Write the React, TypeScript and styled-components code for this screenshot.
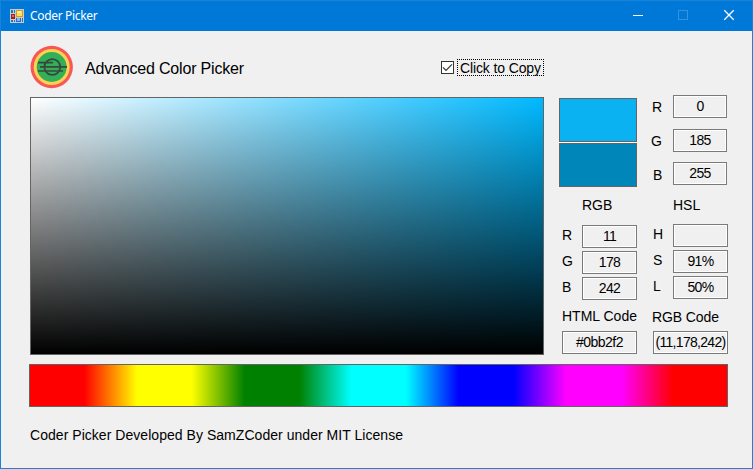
import React from "react";
import styled, { createGlobalStyle } from "styled-components";

const GlobalStyle = createGlobalStyle`
  * { box-sizing: border-box; }
  body { margin: 0; background: #f0f0f0; }
`;

const Window = styled.div`
  width: 753px;
  height: 469px;
  display: flex;
  flex-direction: column;
  border: 1px solid #1883d7;
  background: #f0f0f0;
  color: #000;
  font: 14px/16px "Liberation Sans", Arial, sans-serif;
  white-space: nowrap;
  overflow: hidden;
`;

const TitleBar = styled.header`
  height: 30px;
  flex: none;
  display: flex;
  align-items: center;
  padding-left: 9px;
  background: #0078d7;
  color: #fff;
`;

const AppIcon = styled.svg`
  width: 14px;
  height: 14px;
  display: block;
  margin-right: 6px;
  margin-top: -1px;
`;

const WindowTitle = styled.span`
  flex: 1;
  font: 12px/16px "Noto Sans", "Open Sans", sans-serif;
  letter-spacing: -0.33px;
`;

const WindowControls = styled.svg`
  width: 138px;
  height: 30px;
  display: block;
`;

const Header = styled.div`
  height: 66px;
  flex: none;
  display: flex;
  align-items: flex-start;
  padding-left: 29px;
`;

const Logo = styled.svg`
  width: 44px;
  height: 44px;
  display: block;
  margin-top: 14px;
`;

const Heading = styled.h1`
  margin: 28px 0 0 11px;
  font-size: 16px;
  line-height: 20px;
  font-weight: 400;
  letter-spacing: -0.18px;
  width: 356px;
`;

const CheckLabel = styled.label`
  display: flex;
  align-items: center;
  gap: 3px;
  margin-top: 28px;
`;

const CheckBox = styled.svg`
  width: 13px;
  height: 13px;
  display: block;
`;

const FocusText = styled.span`
  width: 87px;
  height: 17px;
  padding-left: 2px;
  border: 1px dotted #000;
  line-height: 17px;
  letter-spacing: -0.12px;
`;

const Main = styled.main`
  height: 267px;
  flex: none;
  display: flex;
  align-items: flex-start;
  padding-left: 29px;
`;

const ShadeField = styled.div`
  width: 514px;
  height: 258px;
  border: 1px solid #646464;
  background: linear-gradient(to bottom, transparent, #000),
    linear-gradient(to right, #fff, #00b9ff);
`;

const Column = styled.section<{ $left: number; $width: number; $top?: number }>`
  width: ${(p) => p.$width}px;
  margin-left: ${(p) => p.$left}px;
  padding-top: ${(p) => p.$top ?? 0}px;
`;

const Swatches = styled.div`
  display: grid;
  grid-template-rows: 44px 44px;
  gap: 1px;
  height: 89px;
  background: #fff;
`;

const Swatch = styled.div<{ $color: string }>`
  border: 1px solid #646464;
  background: ${(p) => p.$color};
`;

const Caption = styled.div<{ $top: number; $left?: number; $spacing?: number }>`
  margin-top: ${(p) => p.$top}px;
  padding-left: ${(p) => p.$left ?? 0}px;
  letter-spacing: ${(p) => p.$spacing ?? 0}px;
  height: 16px;
`;

const FieldRow = styled.div<{ $top: number; $left?: number; $right?: number }>`
  display: flex;
  justify-content: space-between;
  height: 23px;
  margin-top: ${(p) => p.$top}px;
  padding-left: ${(p) => p.$left ?? 0}px;
  padding-right: ${(p) => p.$right ?? 0}px;
`;

const FieldName = styled.span<{ $drop: number }>`
  padding-top: ${(p) => p.$drop}px;
`;

const ValueBox = styled.output<{ $width: number; $spacing?: number }>`
  width: ${(p) => p.$width}px;
  height: 23px;
  display: flex;
  justify-content: center;
  border: 1px solid #7a7a7a;
  box-shadow: inset 0 0 0 1px #fff;
  line-height: 21px;
  letter-spacing: ${(p) => p.$spacing ?? -0.7}px;
`;

const HueBar = styled.div`
  width: 699px;
  height: 43px;
  flex: none;
  margin-left: 28px;
  border: 1px solid #646464;
  background: linear-gradient(
    to right,
    red 7.8%,
    yellow 15.4% 23.2%,
    green 30.8% 38.6%,
    cyan 46.1% 53.9%,
    blue 61.5% 69.4%,
    magenta 76.9% 84.9%,
    red 92.3%
  );
`;

const Footer = styled.footer`
  margin: 20px 0 0 29px;
  letter-spacing: 0.04px;
`;

interface FieldProps {
  name: string;
  value: string;
  top: number;
  drop?: number;
  width?: number;
  left?: number;
  right?: number;
}

function Field({ name, value, top, drop = 2, width = 55, left, right }: FieldProps) {
  return (
    <FieldRow $top={top} $left={left} $right={right}>
      <FieldName $drop={drop}>{name}</FieldName>
      <ValueBox $width={width}>{value}</ValueBox>
    </FieldRow>
  );
}

export default function App() {
  return (
    <>
      <GlobalStyle />
      <Window>
        <TitleBar>
          <AppIcon viewBox="0 0 14 14" shapeRendering="crispEdges">
            <path fill="#c3cbd3" d="M0 0h14v14H0z" />
            <path fill="#2875b8" d="M1 1h4v3H1zM1 11h4v2H1zM12 9h1v4h-1z" />
            <path fill="#c3cbd3" d="M3 1h1v3H3zM3 11h1v2H3z" />
            <path fill="#9d1f20" d="M1 5h4v5H1z" />
            <path fill="#e46b5b" d="M2 6h2v2H2z" />
            <path fill="#d99b16" d="M6 1h7v7H6z" />
            <path fill="#ffdc5c" d="M7 2h5v5H7z" />
            <path fill="#fff0a7" d="M7 2h4v2H7z" />
            <path fill="#3268c4" d="M6 9h5v4H6z" />
            <path fill="#87b5f1" d="M7 9h3v3H7z" />
          </AppIcon>
          <WindowTitle>Coder Picker</WindowTitle>
          <WindowControls viewBox="0 0 138 30" fill="none">
            <path d="M19 14.5h10" stroke="#fff" />
            <rect x="64.5" y="9.5" width="9" height="9" stroke="#3393df" />
            <path d="M110.3 9.3l9.4 9.4M119.7 9.3l-9.4 9.4" stroke="#fff" strokeWidth="1.3" />
          </WindowControls>
        </TitleBar>
        <Header>
          <Logo viewBox="0 0 44 44" fill="none">
            <circle cx="21.7" cy="22" r="21.2" fill="#f75755" />
            <circle cx="21.7" cy="22" r="18" fill="#fed152" />
            <circle cx="21.7" cy="22" r="15" fill="#31b057" />
            <circle cx="22.3" cy="22" r="7.9" stroke="#3b4540" strokeWidth="1.8" />
            <path d="M8 17.7h15M10 21.8h27M8 26h25" stroke="#3b4540" strokeWidth="1.7" />
          </Logo>
          <Heading>Advanced Color Picker</Heading>
          <CheckLabel>
            <CheckBox viewBox="0 0 13 13" fill="none">
              <rect x=".5" y=".5" width="12" height="12" fill="#fff" stroke="#333" />
              <path d="M2 6.3l3 3 6-6" stroke="#333" strokeWidth="1.2" />
            </CheckBox>
            <FocusText>Click to Copy</FocusText>
          </CheckLabel>
        </Header>
        <Main>
          <ShadeField />
          <Column $left={15} $width={78} $top={1}>
            <Swatches>
              <Swatch $color="#0bb2f2" />
              <Swatch $color="#0086b9" />
            </Swatches>
            <Caption $top={10} $left={23}>RGB</Caption>
            <Field name="R" value="11" top={12} left={3} />
            <Field name="G" value="178" top={3} left={3} />
            <Field name="B" value="242" top={3} left={3} />
            <Caption $top={8} $left={3}>HTML Code</Caption>
            <FieldRow $top={7} $left={3}>
              <ValueBox $width={75} $spacing={-0.5}>#0bb2f2</ValueBox>
            </FieldRow>
          </Column>
          <Column $left={14} $width={77}>
            <Field name="R" value="0" top={-2} drop={4} width={54} left={1} right={1} />
            <Field name="G" value="185" top={11} drop={4} width={54} right={1} />
            <Field name="B" value="255" top={10} drop={5} width={54} left={2} right={1} />
            <Caption $top={12} $left={22}>HSL</Caption>
            <Field name="H" value="" top={11} left={2} />
            <Field name="S" value="91%" top={3} left={2} />
            <Field name="L" value="50%" top={3} left={2} />
            <Caption $top={10} $left={1} $spacing={-0.1}>RGB Code</Caption>
            <FieldRow $top={6} $left={2}>
              <ValueBox $width={75}>(11,178,242)</ValueBox>
            </FieldRow>
          </Column>
        </Main>
        <HueBar />
        <Footer>Coder Picker Developed By SamZCoder under MIT License</Footer>
      </Window>
    </>
  );
}
